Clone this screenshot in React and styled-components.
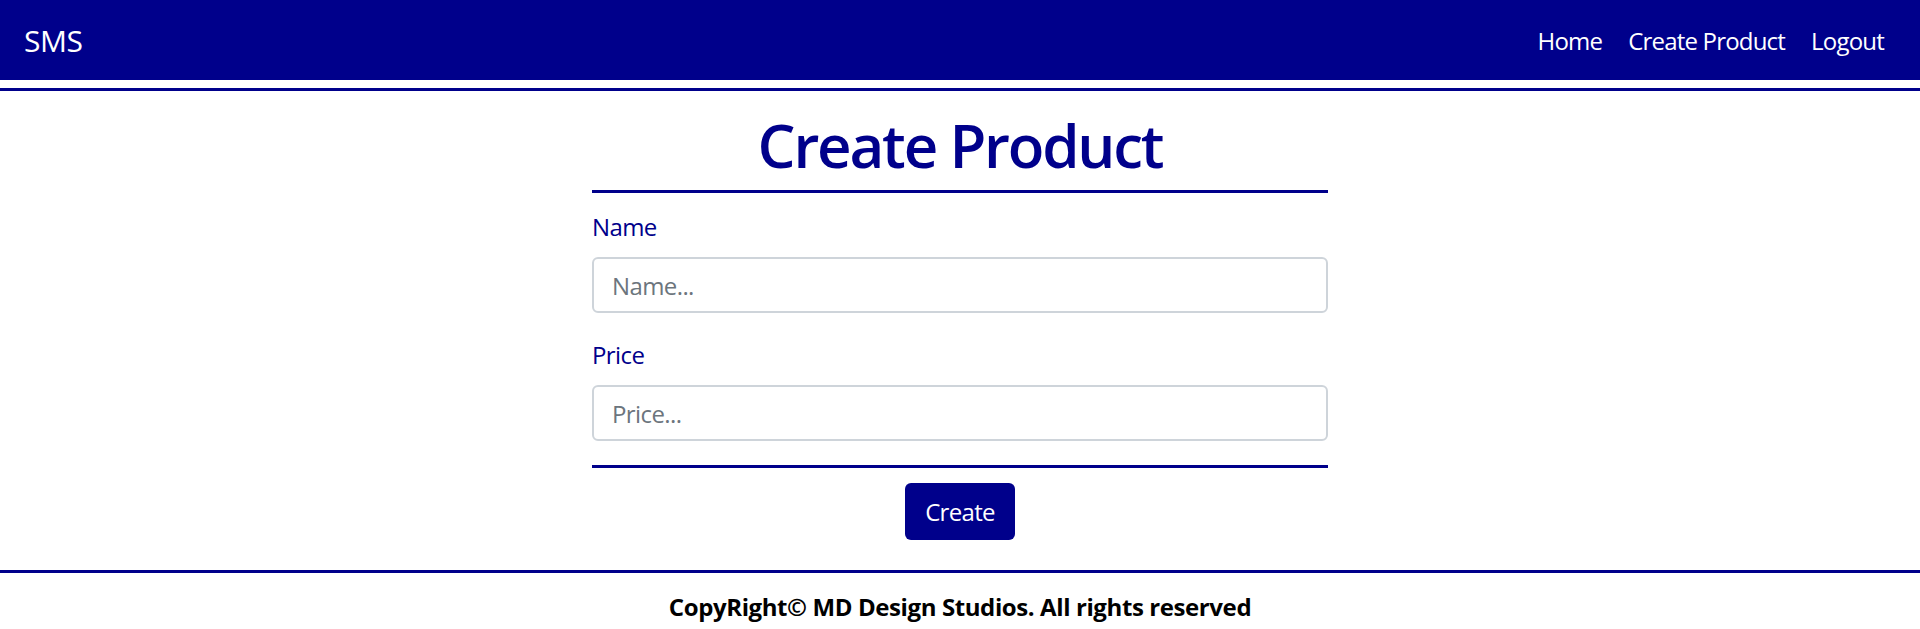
import React from 'react';
import styled, { createGlobalStyle } from 'styled-components';

const blue = '#00008b';

const GlobalStyle = createGlobalStyle`
  body {
    margin: 0;
    background: #fff;
    font-family: "Open Sans", "Noto Sans", sans-serif;
  }
  * {
    box-sizing: border-box;
  }
`;

const App = () => {
    return (
        <>
            <GlobalStyle />
            <Navbar>
                <Brand>SMS</Brand>
                <NavLinks>
                    <NavLink>Home</NavLink>
                    <NavLink>Create Product</NavLink>
                    <NavLink>Logout</NavLink>
                </NavLinks>
            </Navbar>
            <Rule />
            <Main>
                <Title>Create Product</Title>
                <Rule />
                <Fields>
                    <Field>
                        <Label htmlFor="name">Name</Label>
                        <Input id="name" placeholder="Name..." />
                    </Field>
                    <Field>
                        <Label htmlFor="price">Price</Label>
                        <Input id="price" placeholder="Price..." />
                    </Field>
                </Fields>
                <Rule />
                <Actions>
                    <Button>Create</Button>
                </Actions>
            </Main>
            <Footer>
                <Rule />
                <FooterText>CopyRight© MD Design Studios. All rights reserved</FooterText>
            </Footer>
        </>
    );
};
export default App;

const Navbar = styled.nav`
  height: 80px;
  background: ${blue};
  display: flex;
  align-items: center;
  justify-content: space-between;
  padding: 0 36px 0 24px;
  margin-bottom: 8px;
`
const Brand = styled.span`
  color: #fff;
  font-size: 30px;
  letter-spacing: -0.5px;
`
const NavLinks = styled.div`
  display: flex;
  gap: 26px;
`
const NavLink = styled.a`
  color: #fff;
  font-size: 24px;
  letter-spacing: -0.8px;
  cursor: pointer;
`
const Rule = styled.div`
  height: 3px;
  background: ${blue};
  width: 100%;
`
const Main = styled.main`
  width: 736px;
  margin: 0 auto;
  display: flex;
  flex-direction: column;
`
const Title = styled.h1`
  margin: 18px 0 9px;
  font-size: 60px;
  line-height: 72px;
  font-weight: 600;
  color: ${blue};
  text-align: center;
  letter-spacing: -2.2px;
`
const Fields = styled.div`
  display: flex;
  flex-direction: column;
  gap: 24px;
  margin: 16px 0 24px;
`
const Field = styled.div`
  display: flex;
  flex-direction: column;
  gap: 12px;
`
const Label = styled.label`
  font-size: 24px;
  line-height: 36px;
  color: ${blue};
  letter-spacing: -0.6px;
`
const Input = styled.input`
  height: 56px;
  width: 100%;
  border: 2px solid #ced4da;
  border-radius: 6px;
  padding: 0 18px;
  font-family: inherit;
  font-size: 24px;
  letter-spacing: -0.6px;
  color: #212529;
  outline: none;
  &::placeholder {
    color: #6c757d;
  }
`
const Actions = styled.div`
  display: flex;
  justify-content: center;
  padding: 15px 0 30px;
`
const Button = styled.button`
  height: 57px;
  padding: 0 20px;
  background: ${blue};
  color: #fff;
  border: none;
  border-radius: 6px;
  font-family: inherit;
  font-size: 24px;
  letter-spacing: -0.7px;
  cursor: pointer;
`
const Footer = styled.footer`
  display: flex;
  flex-direction: column;
`
const FooterText = styled.p`
  margin: 16px 0 0;
  font-size: 24px;
  line-height: 36px;
  font-weight: 700;
  color: #000;
  text-align: center;
  letter-spacing: -0.4px;
`
